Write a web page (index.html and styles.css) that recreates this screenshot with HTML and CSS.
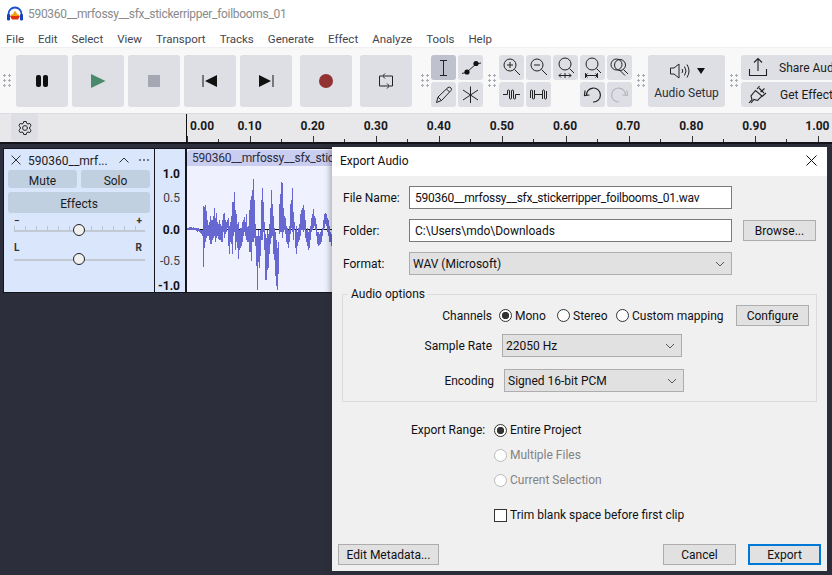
FILE: index.html
```html
<!DOCTYPE html>
<html lang="en">
<head>
<meta charset="UTF-8">
<meta name="viewport" content="width=device-width, initial-scale=1.0">
<title>Audacity - Export Audio</title>
<link rel="stylesheet" href="styles.css">
</head>
<body>
<div class="titlebar">
  <svg class="logo" width="16" height="16" viewBox="0 0 16 16">
    <path d="M1.500 10V8a6.500 6.500 0 0 1 13 0v2" fill="none" stroke="#1a4fd0" stroke-width="1.800"/>
    <rect x="0" y="8" width="3" height="6.500" rx="1.200" fill="#1a3fc0"/>
    <rect x="13" y="8" width="3" height="6.500" rx="1.200" fill="#1a3fc0"/>
    <path d="M3 10 5 8l1 .5 1-3h2l1 3 1-.5 2 2z" fill="#f0a010"/>
    <path d="M3 10h10l-2 3.500H5z" fill="#e03010"/>
  </svg>
  <span>590360__mrfossy__sfx_stickerripper_foilbooms_01</span>
</div>

<div class="menubar">
  <span>File</span><span>Edit</span><span>Select</span><span>View</span><span>Transport</span><span>Tracks</span><span>Generate</span><span>Effect</span><span>Analyze</span><span>Tools</span><span>Help</span>
</div>

<div class="toolbar">
  <div class="grip"></div>
  <div class="transport">
    <button class="big"><svg width="16" height="16" viewBox="0 0 16 16"><rect x="2" y="2" width="5" height="12" rx="2" fill="#111"/><rect x="9" y="2" width="5" height="12" rx="2" fill="#111"/></svg></button>
    <button class="big"><svg width="16" height="16" viewBox="0 0 16 16"><path d="M1 1 15.500 8 1 15z" fill="#4a8a6c"/></svg></button>
    <button class="big"><svg width="14" height="14" viewBox="0 0 14 14"><rect x="1" y="1" width="12" height="12" fill="#a5a8b2"/></svg></button>
    <button class="big"><svg width="16" height="14" viewBox="0 0 16 14"><path d="M1 1V13" stroke="#111"/><path d="M15 1V13L3 7z" fill="#111"/></svg></button>
    <button class="big gap"><svg width="16" height="14" viewBox="0 0 16 14"><path d="M15 1V13" stroke="#111"/><path d="M1 1V13L13 7z" fill="#111"/></svg></button>
    <button class="big gap"><svg width="16" height="16" viewBox="0 0 16 16"><circle cx="8" cy="8" r="7" fill="#933232"/></svg></button>
    <button class="big"><svg width="16" height="18" viewBox="0 0 16 18"><path d="M5 4H14.500V14H12M11 14H1.500V4H4M7 1.500 4.500 4 7 6.500M9 11.500 11.500 14 9 16.500" fill="none" stroke="#222"/></svg></button>
  </div>
  <div class="grip"></div>
  <div class="tools">
    <button class="tool active"><svg viewBox="0 0 25 25"><path d="M9 5.500h7M12.500 5.500v15M9 20.500h7" fill="none" stroke="#222"/></svg></button>
    <button class="tool"><svg viewBox="0 0 25 25"><path d="M4 18.500 9 17 18 9 23 8" fill="none" stroke="#222"/><circle cx="9" cy="17" r="2.600" fill="#111"/><circle cx="18" cy="8.500" r="2.600" fill="#111"/></svg></button>
    <button class="tool"><svg viewBox="0 0 25 25"><path d="M5.500 20.500 7 15 17 5.500Q19 4.500 20 6T20 8.500L10.500 18.500zM7 15 10.500 18.500M15.500 7 18.500 10" fill="none" stroke="#222"/></svg></button>
    <button class="tool"><svg viewBox="0 0 25 25"><path d="M12.500 4.500V21M5 8 20 18M20 8 5 18" fill="none" stroke="#222"/></svg></button>
  </div>
  <div class="grip"></div>
  <div class="tools zoomtools">
    <button class="tool"><svg viewBox="0 0 25 25"><circle cx="11" cy="10" r="6" fill="none" stroke="#222"/><path d="M15.500 14.500 21 20M8 10h6M11 7v6" fill="none" stroke="#222"/></svg></button>
    <button class="tool"><svg viewBox="0 0 25 25"><circle cx="11" cy="10" r="6" fill="none" stroke="#222"/><path d="M15.500 14.500 21 20M8 10h6" fill="none" stroke="#222"/></svg></button>
    <button class="tool"><svg viewBox="0 0 25 25"><circle cx="12" cy="9" r="6" fill="none" stroke="#222"/><path d="M16.500 13.500 21 18M6 20.500h12M8 18.500 6 20.500 8 22.500M16 18.500 18 20.500 16 22.500M12 18v5" fill="none" stroke="#222"/></svg></button>
    <button class="tool"><svg viewBox="0 0 25 25"><circle cx="12" cy="9" r="6" fill="none" stroke="#222"/><path d="M16.500 13.500 21 18M5 20.500h13M5.500 18v5M17.500 18v5M7.500 18.500 5.500 20.500 7.500 22.500M15.500 18.500 17.500 20.500 15.500 22.500" fill="none" stroke="#222"/></svg></button>
    <button class="tool"><svg viewBox="0 0 25 25"><circle cx="9.500" cy="9.500" r="5.500" fill="none" stroke="#222"/><circle cx="13" cy="10" r="5.500" fill="none" stroke="#222"/><path d="M16.500 14.500 21 19M13 15.500 18 20.500" fill="none" stroke="#222"/></svg></button>
    <button class="tool"><svg viewBox="0 0 25 25"><path d="M4 12.500H8.500M21 12.500H16.500M8.500 12.500V9Q8.500 8 9.500 8T10.500 9V16Q10.500 17 11.500 17T12.500 16V9Q12.500 8 13.500 8T14.500 9V16Q14.500 17 15.500 17T16.500 16V12.500" fill="none" stroke="#222"/></svg></button>
    <button class="tool"><svg viewBox="0 0 25 25"><path d="M8.500 12.500H16.500M4.500 16V9Q4.500 8 5.500 8T6.500 9V16Q6.500 17 7.500 17T8.500 16V8M16.500 17V9Q16.500 8 17.500 8T18.500 9V16Q18.500 17 19.500 17T20.500 16V9" fill="none" stroke="#222"/></svg></button>
    <span class="tool-blank"></span>
    <button class="tool"><svg viewBox="0 0 25 25"><path d="M6.500 14A7 7 0 1 1 13 20M5 8.500 4.500 13.500 9.500 13" fill="none" stroke="#222" stroke-width="1.200"/></svg></button>
    <button class="tool"><svg viewBox="0 0 25 25"><path d="M18.500 14A7 7 0 1 0 12 20M20 8.500 20.500 13.500 15.500 13" fill="none" stroke="#b5b7be" stroke-width="1.200"/></svg></button>
  </div>
  <div class="grip"></div>
  <button class="audio-setup">
    <span class="audio-icon">
      <svg width="22" height="16" viewBox="0 0 22 16"><path d="M1.500 5H5L10 1V15L5 11H1.500zM13 6Q14.500 8 13 10M15.500 3.500Q18.500 8 15.500 12.500M18 1.500Q22 8 18 14.500" fill="none" stroke="#222"/></svg>
      <svg width="8" height="6" viewBox="0 0 8 6"><path d="M0 0H8L4 6z" fill="#111"/></svg>
    </span>
    <span>Audio Setup</span>
  </button>
  <div class="grip"></div>
  <div class="share-col">
    <button class="wide"><svg width="20" height="20" viewBox="0 0 20 20"><path d="M1.500 12V18.500H18.500V12M10 14V2M6 5.500 10 1.500 14 5.500" fill="none" stroke="#222" stroke-width="1.100"/></svg><span>Share Audio</span></button>
    <button class="wide effects"><svg width="20" height="20" viewBox="0 0 20 20"><path d="M1 19 4 15.500 3 12 7.500 6.500 14 12 9.500 16.500 6 15.500 3 19M9 5 11.500 2M12.500 8 16.500 4.500M14 12.500 18 9M11 4 16 9" fill="none" stroke="#222" stroke-width="1.100"/></svg><span>Get Effects</span></button>
  </div>
</div>

<div class="rulerbar">
  <div class="ruler-left"><button class="gear"><svg width="16" height="16" viewBox="0 0 16 16"><circle cx="8" cy="8" r="2.400" fill="none" stroke="#222"/><path d="M6.700 1.500H9.300L9.700 3.300 11 4 12.800 3.400 14.100 5.700 12.700 7V9L14.100 10.300 12.800 12.600 11 12 9.700 12.700 9.300 14.500H6.700L6.300 12.700 5 12 3.200 12.600 1.900 10.300 3.300 9V7L1.900 5.700 3.200 3.400 5 4 6.300 3.300z" fill="none" stroke="#222"/></svg></button></div>
  <div class="ruler">
    <span class="first">0.00</span><span>0.10</span><span>0.20</span><span>0.30</span><span>0.40</span><span>0.50</span><span>0.60</span><span>0.70</span><span>0.80</span><span>0.90</span><span>1.00</span>
  </div>
</div>

<div class="tracks">
  <div class="track">
    <div class="track-panel">
      <div class="track-head">
        <svg width="10" height="10" viewBox="0 0 10 10"><path d="M.5.500 9.500 9.500M9.500.500 .5 9.500" stroke="#333"/></svg>
        <span class="track-name">590360__mrf...</span>
        <svg width="10" height="6" viewBox="0 0 10 6"><path d="M.5 5.500 5 1 9.500 5.500" fill="none" stroke="#333"/></svg>
        <svg width="10" height="4" viewBox="0 0 10 4"><path d="M0 2h2M4 2h2M8 2h2" stroke="#555" stroke-width="1.500"/></svg>
      </div>
      <div class="track-btns"><button>Mute</button><button>Solo</button></div>
      <button class="effects-btn">Effects</button>
      <div class="scale-labels"><span>−</span><span>+</span></div>
      <div class="slider"><i></i></div>
      <div class="scale-labels pan"><span>L</span><span>R</span></div>
      <div class="slider plain"><i></i></div>
    </div>
    <div class="vscale">
      <b>1.0</b><span>0.5</span><b class="zero">0.0</b><span>-0.5</span><b class="minus">-1.0</b>
    </div>
    <div class="clip">
      <div class="clip-head">590360__mrfossy__sfx_stickerripper_foilbooms_01</div>
      <svg class="wave" width="146" height="122" viewBox="0 0 146 122">
        <path d="M0 59.500H146" stroke="#111"/>
        <path fill="none" stroke="#6767d2" transform="translate(-.5 0)" d="M0 58V61M1 58V60M2 58V60M3 57V60M4 57V60M5 57V60M6 58V60M7 57V60M8 58V60M9 58V60M10 58V61M11 58V62M12 58V61M13 59V62M14 60V63M15 60V64M16 60V66M17 36V97M18 37V78M19 35V72M20 41V68M21 50V66M22 55V66M23 52V70M24 46V74M25 50V74M26 50V70M27 46V68M28 38V66M29 48V72M30 43V68M31 52V66M32 54V69M33 50V70M34 54V70M35 56V72M36 50V72M37 44V62M38 43V68M39 50V64M40 52V62M41 50V58M42 48V76M43 56V84M44 52V72M45 46V74M46 32V84M47 32V66M48 22V62M49 40V80M50 44V72M51 54V78M52 52V89M53 60V80M54 58V78M55 58V76M56 52V72M57 50V66M58 47V62M59 52V66M60 44V70M61 57V72M62 56V72M63 40V82M64 30V82M65 26V91M66 20V72M67 9V72M68 30V68M69 54V76M70 66V96M71 66V120M72 60V92M73 66V98M74 60V86M75 30V70M76 18V70M77 32V62M78 52V80M79 64V110M80 68V110M81 60V100M82 64V98M83 54V84M84 38V74M85 20V68M86 34V66M87 46V84M88 58V90M89 62V106M90 70V116M91 78V120M92 72V104M93 34V64M94 24V62M95 12V62M96 13V68M97 38V62M98 46V60M99 48V64M100 56V72M101 58V74M102 60V78M103 56V72M104 34V64M105 30V58M106 18V62M107 42V70M108 52V60M109 60V78M110 56V84M111 62V76M112 58V72M113 54V70M114 44V66M115 40V60M116 38V60M117 35V62M118 40V60M119 50V68M120 60V72M121 58V76M122 62V80M123 60V78M124 56V70M125 48V62M126 44V60M127 39V58M128 46V56M129 48V60M130 54V66M131 62V74M132 62V76M133 64V75M134 62V74M135 60V72M136 58V66M137 50V60M138 44V58M139 43V54M140 44V56M141 48V62M142 50V66M143 56V72M144 62V72M145 64V76"/>
      </svg>
    </div>
  </div>
</div>

<div class="dialog">
  <div class="dialog-title">
    <span>Export Audio</span>
    <svg width="11" height="11" viewBox="0 0 11 11"><path d="M.5.500 10.500 10.500M10.500.500 .5 10.500" stroke="#111"/></svg>
  </div>
  <div class="dialog-body">
    <div class="form-row">
      <label>File Name:</label>
      <input class="field filename" type="text" value="590360__mrfossy__sfx_stickerripper_foilbooms_01.wav">
    </div>
    <div class="form-row folder-row">
      <label>Folder:</label>
      <input class="field" type="text" value="C:\Users\mdo\Downloads">
      <button class="win-btn browse">Browse...</button>
    </div>
    <div class="form-row format-row">
      <label>Format:</label>
      <div class="dropdown format"><span>WAV (Microsoft)</span><svg width="10" height="6" viewBox="0 0 10 6"><path d="M1 1 5 5 9 1" fill="none" stroke="#555"/></svg></div>
    </div>

    <fieldset class="options">
      <legend>Audio options</legend>
      <div class="opt-row channels">
        <label class="opt-label">Channels</label>
        <label class="radio mono"><input type="radio" name="ch" checked>Mono</label>
        <label class="radio stereo"><input type="radio" name="ch">Stereo</label>
        <label class="radio"><input type="radio" name="ch">Custom mapping</label>
        <button class="win-btn configure">Configure</button>
      </div>
      <div class="opt-row rate">
        <label class="opt-label">Sample Rate</label>
        <div class="dropdown small"><span>22050 Hz</span><svg width="10" height="6" viewBox="0 0 10 6"><path d="M1 1 5 5 9 1" fill="none" stroke="#555"/></svg></div>
      </div>
      <div class="opt-row encoding">
        <label class="opt-label">Encoding</label>
        <div class="dropdown small"><span>Signed 16-bit PCM</span><svg width="10" height="6" viewBox="0 0 10 6"><path d="M1 1 5 5 9 1" fill="none" stroke="#555"/></svg></div>
      </div>
    </fieldset>

    <div class="range">
      <label class="range-label">Export Range:</label>
      <div class="range-list">
        <label class="radio"><input type="radio" name="range" checked>Entire Project</label>
        <label class="radio disabled"><input type="radio" name="range" disabled>Multiple Files</label>
        <label class="radio disabled"><input type="radio" name="range" disabled>Current Selection</label>
        <label class="check"><input type="checkbox">Trim blank space before first clip</label>
      </div>
    </div>

    <div class="dialog-foot">
      <button class="win-btn meta">Edit Metadata...</button>
      <button class="win-btn cancel">Cancel</button>
      <button class="win-btn export">Export</button>
    </div>
  </div>
</div>
</body>
</html>
```

FILE: styles.css
```css
* {
  box-sizing: border-box;
}
body {
  font-family: Roboto, "Noto Sans", sans-serif;
  font-size: 12px;
  margin: 0;
  padding: 0;
  width: 832px;
  height: 575px;
  overflow: hidden;
  position: relative;
  background-color: #2c2e3b;
  color: #1c1c20;
}
button {
  font: inherit;
  color: inherit;
  border: none;
  padding: 0;
  cursor: pointer;
}

/* top of the window */
.titlebar {
  height: 31px;
  background-color: #fff;
  display: flex;
  align-items: center;
  gap: 5px;
  padding: 0 0 3px 7px;
  color: #8a8a8a;
  letter-spacing: -0.3px;
}
.menubar {
  height: 16px;
  background-color: #fff;
  display: flex;
  gap: 14px;
  padding-left: 6px;
  font-size: 11.5px;
  line-height: 16px;
  color: #44464f;
}
.toolbar {
  height: 66px;
  background-color: #f8f8f9;
  border-top: 1px solid #f0f0f2;
  display: flex;
  align-items: center;
  padding-left: 2px;
  overflow: hidden;
}
.grip {
  flex: none;
  width: 10px;
  height: 15px;
  background-image: radial-gradient(circle, #a9acb6 1.1px, transparent 1.4px);
  background-size: 5px 5px;
  margin-right: 2px;
}
.transport {
  display: flex;
  gap: 4px;
  margin: 0 8px 0 2px;
}
.big {
  width: 52px;
  height: 52px;
  background-color: #dedfe4;
  border-radius: 3px;
  display: flex;
  align-items: center;
  justify-content: center;
}
.big.gap {
  margin-right: 4px;
}
.tools {
  display: grid;
  grid-template-columns: repeat(2, 25px);
  gap: 2px;
  margin-right: 4px;
  margin-left: -1px;
}
.zoomtools {
  grid-template-columns: repeat(5, 25px);
  margin-left: 0;
}
.tool {
  width: 25px;
  height: 25px;
  background-color: #dedfe4;
  border-radius: 3px;
  display: block;
}
.tool svg {
  display: block;
  width: 25px;
  height: 25px;
}
.tool.active {
  background-color: #bfc2ce;
}
.audio-setup {
  flex: none;
  width: 77px;
  height: 52px;
  background-color: #dedfe4;
  border-radius: 3px;
  display: flex;
  flex-direction: column;
  align-items: center;
  gap: 7px;
  padding-top: 8px;
  margin-right: 4px;
  color: #2c2e38;
}
.audio-icon {
  display: flex;
  align-items: center;
  gap: 6px;
}
.share-col {
  flex: none;
  display: flex;
  flex-direction: column;
  gap: 2px;
}
.wide {
  width: 110px;
  height: 25px;
  background-color: #dedfe4;
  border-radius: 3px 0 0 3px;
  display: flex;
  align-items: center;
  gap: 11px;
  padding-left: 7px;
  white-space: nowrap;
}
.wide span {
  padding-top: 2px;
}
.wide.effects {
  gap: 12px;
}

/* timeline */
.rulerbar {
  height: 29px;
  background-color: #e8e8ea;
  border-top: 1px solid #dcdce0;
  display: flex;
}
.ruler-left {
  flex: none;
  width: 186px;
  padding-left: 11px;
}
.gear {
  width: 27px;
  height: 27px;
  background-color: #dedfe4;
  border-radius: 3px;
  display: flex;
  align-items: center;
  justify-content: center;
}
.ruler {
  flex: none;
  width: 646px;
  display: flex;
  border-left: 1px solid #111;
  font-weight: 700;
  color: #1a1a20;
  background-image:
    repeating-linear-gradient(to right, #333 0 1px, transparent 1px 63.1px),
    repeating-linear-gradient(to right, #333 0 1px, transparent 1px 63.1px);
  background-size: 100% 6px, 100% 3px;
  background-position: 0 bottom, 31px bottom;
  background-repeat: no-repeat;
}
.ruler span {
  flex: none;
  width: 63.1px;
  text-align: center;
  line-height: 24px;
}
.ruler .first {
  width: 31px;
  text-align: left;
  padding-left: 3px;
}

/* the track */
.tracks {
  height: 6px;
  border-top: 2px solid #14141a;
}
.track {
  position: absolute;
  left: 3px;
  top: 148px;
  width: 824px;
  height: 145px;
  border: 1px solid #14141a;
  border-right: 0;
  display: flex;
}
.track-panel {
  width: 151px;
  flex: none;
  background-color: #dae6fc;
  border-right: 1px solid #14141a;
  padding: 0 4px;
}
.track-head {
  height: 21px;
  display: flex;
  align-items: center;
  padding: 1px 0 0 3px;
}
.track-name {
  margin: 2px 4px 0 7px;
  width: 87px;
  white-space: nowrap;
  overflow: hidden;
  color: #1c1c24;
}
.track-head svg:last-child {
  margin-left: 10px;
}
.track-btns {
  display: flex;
  gap: 4px;
}
.track-btns button {
  width: 69px;
  height: 18px;
  background-color: #c1d0e0;
  border-radius: 3px;
  padding-top: 4px;
}
.effects-btn {
  display: block;
  width: 142px;
  height: 21px;
  margin-top: 4px;
  padding-top: 2px;
  background-color: #c1d0e0;
  border-radius: 3px;
}
.scale-labels {
  display: flex;
  justify-content: space-between;
  padding: 0 8px 0 6px;
  height: 11px;
  font-size: 10px;
  line-height: 11px;
  font-weight: 700;
  color: #333;
  margin-top: 2px;
}
.scale-labels.pan {
  margin-top: 10px;
}
.slider {
  position: relative;
  height: 6px;
  margin: 0 5px 0 6px;
  background-image: repeating-linear-gradient(to right, #bcc4d0 0 1px, transparent 1px 11px);
  border-bottom: 2px solid #c3c9d2;
}
.slider.plain {
  background-image: none;
  margin-top: 2px;
}
.slider i {
  position: absolute;
  left: 59px;
  top: -2px;
  width: 12px;
  height: 12px;
  border-radius: 50%;
  background-color: #f0f0f0;
  border: 1px solid #222;
}
.vscale {
  position: relative;
  width: 32px;
  flex: none;
  background-color: #dae6fc;
  border-right: 2px solid #14141a;
  text-align: right;
  padding: 17px 5px 0 0;
  color: #3c3c44;
}
.vscale b, .vscale span {
  display: block;
  height: 24px;
  line-height: 17px;
}
.vscale b {
  color: #111;
}
.vscale span {
  height: 32px;
}
.vscale .zero {
  height: 31px;
}
.vscale .minus {
  margin-top: -7px;
}
.clip {
  flex: 1;
  background-color: #eff2fe;
  overflow: hidden;
}
.clip-head {
  height: 16px;
  margin-top: 1px;
  padding-left: 5px;
  background-color: #c9cef1;
  border-top-left-radius: 4px;
  line-height: 17px;
  color: #2c2c3c;
  white-space: nowrap;
  letter-spacing: -0.2px;
}
.wave {
  display: block;
  margin-top: 4px;
}

/* export dialog, sits over the project window */
.dialog {
  position: absolute;
  left: 332px;
  top: 147px;
  width: 495px;
  height: 424px;
  background-color: #f0f0f0;
  box-shadow: -2px 0 6px rgba(40, 40, 50, 0.35);
  color: #101014;
}
.dialog-title {
  height: 29px;
  background-color: #fff;
  display: flex;
  align-items: center;
  justify-content: space-between;
  padding: 0 10px 2px 8px;
}
.dialog-body {
  padding: 10px 0 0 11px;
}
.form-row {
  display: flex;
  align-items: center;
  height: 23px;
}
.form-row label {
  width: 66px;
  flex: none;
}
.folder-row {
  margin-top: 10px;
}
.format-row {
  margin-top: 10px;
}
.field {
  width: 323px;
  height: 23px;
  border: 1px solid #7a7a7a;
  background-color: #fff;
  font: inherit;
  color: #101014;
  padding: 0 5px;
  outline: none;
}
.filename {
  letter-spacing: -0.25px;
}
.win-btn {
  height: 21px;
  background-color: #e1e1e1;
  border: 1px solid #adadad;
  text-align: center;
}
.browse {
  width: 73px;
  margin-left: 11px;
}
.dropdown {
  height: 23px;
  background-color: #e1e1e1;
  border: 1px solid #adadad;
  display: flex;
  align-items: center;
  justify-content: space-between;
  padding: 0 6px 0 3px;
}
.dropdown.format {
  width: 323px;
}
.dropdown.small {
  width: 180px;
}
.options {
  margin: 12px 0 0 -1px;
  padding: 0;
  width: 475px;
  height: 115px;
  border: 1px solid #dcdcdc;
}
.options legend {
  margin-left: 5px;
  padding: 0 3px;
  line-height: 14px;
}
.opt-row {
  display: flex;
  align-items: center;
  padding-right: 7px;
}
.opt-label {
  width: 149px;
  text-align: right;
  flex: none;
}
.channels {
  height: 21px;
  margin-top: 4px;
}
.mono {
  width: 58px;
  margin-left: 7px;
}
.stereo {
  width: 59px;
}
.configure {
  width: 73px;
  margin-left: auto;
}
.rate {
  margin-top: 8px;
}
.rate .dropdown {
  margin-left: 10px;
}
.encoding {
  margin-top: 12px;
}
.encoding .opt-label {
  width: 151px;
}
.encoding .dropdown {
  margin-left: 10px;
}
.radio, .check {
  display: flex;
  align-items: center;
  gap: 3px;
}
.radio input, .check input {
  appearance: none;
  -webkit-appearance: none;
  margin: 0;
  width: 13px;
  height: 13px;
  flex: none;
  background-color: #fff;
  border: 1px solid #333;
}
.radio input {
  border-radius: 50%;
}
.radio input:checked {
  background-image: radial-gradient(circle, #333 3.400px, transparent 4px);
}
.radio.disabled {
  color: #838383;
}
.radio.disabled input {
  border-color: #bbb;
}
.range {
  display: flex;
  margin-top: 20px;
}
.range-label {
  width: 151px;
  flex: none;
  padding-left: 68px;
  line-height: 16px;
}
.range-list {
  display: flex;
  flex-direction: column;
  gap: 9px;
}
.range-list .radio {
  height: 16px;
}
.range-list .check {
  height: 16px;
  margin-top: 10px;
}
.dialog-foot {
  display: flex;
  position: absolute;
  left: 6px;
  right: 6px;
  bottom: 6px;
}
.meta {
  width: 101px;
  margin-right: auto;
}
.cancel {
  width: 73px;
  margin-right: 12px;
}
.export {
  width: 73px;
  border: 2px solid #0078d7;
}
```
